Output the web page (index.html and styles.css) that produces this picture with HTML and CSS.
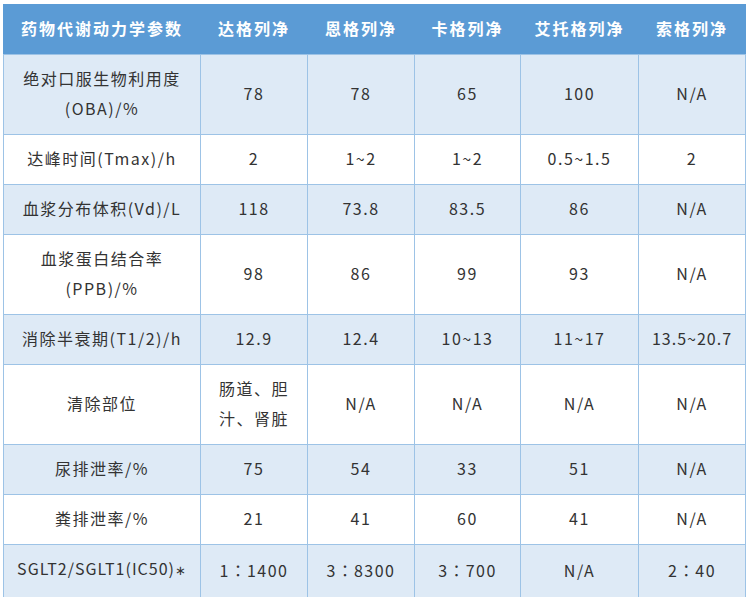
FILE: index.html
```html
<!DOCTYPE html>
<html lang="zh">
<head>
<meta charset="utf-8">
<link rel="stylesheet" href="styles.css">
</head>
<body>
<div class="wrap">
<table class="pk">
  <colgroup>
    <col class="c-param">
    <col class="c-a">
    <col class="c-b">
    <col class="c-c">
    <col class="c-d">
    <col class="c-e">
  </colgroup>
  <thead>
    <tr class="head">
      <th>药物代谢动力学参数</th>
      <th>达格列净</th>
      <th>恩格列净</th>
      <th>卡格列净</th>
      <th>艾托格列净</th>
      <th>索格列净</th>
    </tr>
  </thead>
  <tbody>
    <tr class="alt">
      <td>绝对口服生物利用度<br>(OBA)/%</td>
      <td>78</td><td>78</td><td>65</td><td>100</td><td>N/A</td>
    </tr>
    <tr>
      <td>达峰时间(Tmax)/h</td>
      <td>2</td><td>1~2</td><td>1~2</td><td>0.5~1.5</td><td>2</td>
    </tr>
    <tr class="alt">
      <td>血浆分布体积(Vd)/L</td>
      <td>118</td><td>73.8</td><td>83.5</td><td>86</td><td>N/A</td>
    </tr>
    <tr>
      <td>血浆蛋白结合率<br>(PPB)/%</td>
      <td>98</td><td>86</td><td>99</td><td>93</td><td>N/A</td>
    </tr>
    <tr class="alt">
      <td>消除半衰期(T1/2)/h</td>
      <td>12.9</td><td>12.4</td><td>10~13</td><td>11~17</td><td class="tight">13.5~20.7</td>
    </tr>
    <tr>
      <td>清除部位</td>
      <td>肠道、胆<br>汁、肾脏</td><td>N/A</td><td>N/A</td><td>N/A</td><td>N/A</td>
    </tr>
    <tr class="alt">
      <td>尿排泄率/%</td>
      <td>75</td><td>54</td><td>33</td><td>51</td><td>N/A</td>
    </tr>
    <tr>
      <td>粪排泄率/%</td>
      <td>21</td><td>41</td><td>60</td><td>41</td><td>N/A</td>
    </tr>
    <tr class="alt">
      <td class="tight">SGLT2/SGLT1(IC50)<span class="ast">∗</span></td>
      <td>1<span class="colon">：</span>1400</td><td>3<span class="colon">：</span>8300</td><td>3<span class="colon">：</span>700</td><td>N/A</td><td>2<span class="colon">：</span>40</td>
    </tr>
  </tbody>
</table>
</div>
</body>
</html>
```

FILE: styles.css
```css
html, body {
  margin: 0;
  padding: 0;
  background: #ffffff;
}

.wrap {
  padding: 4px 3px 3px 3px;
}

.pk {
  width: 742px;
  table-layout: fixed;
  border-collapse: collapse;
  font-family: "Noto Sans CJK SC", "Noto Sans", sans-serif;
  font-size: 16px;
  color: #333333;
  letter-spacing: 1.5px;
}

.c-param { width: 197px; }
.c-a { width: 107px; }
.c-b { width: 107px; }
.c-c { width: 106px; }
.c-d { width: 118px; }
.c-e { width: 107px; }

.pk th,
.pk td {
  border: 1px solid #9dc3e6;
  text-align: center;
  vertical-align: middle;
  line-height: 30px;
  padding: 8px 4px 11px;
  overflow: visible;
  white-space: nowrap;
}

.pk .head th {
  background: #5b9bd5;
  color: #ffffff;
  font-weight: bold;
  letter-spacing: 2px;
  border-color: #5b9bd5;
  border-bottom-color: #9dc3e6;
}

.pk .alt td {
  background: #deeaf6;
}

.pk td.tight {
  letter-spacing: 1px;
  padding-left: 0;
  padding-right: 0;
}

.colon {
  font-family: "Noto Sans CJK TC", "Noto Sans CJK SC", sans-serif;
  letter-spacing: 1px;
}

.ast {
  font-family: "DejaVu Sans", sans-serif;
  font-size: 13px;
}
```
